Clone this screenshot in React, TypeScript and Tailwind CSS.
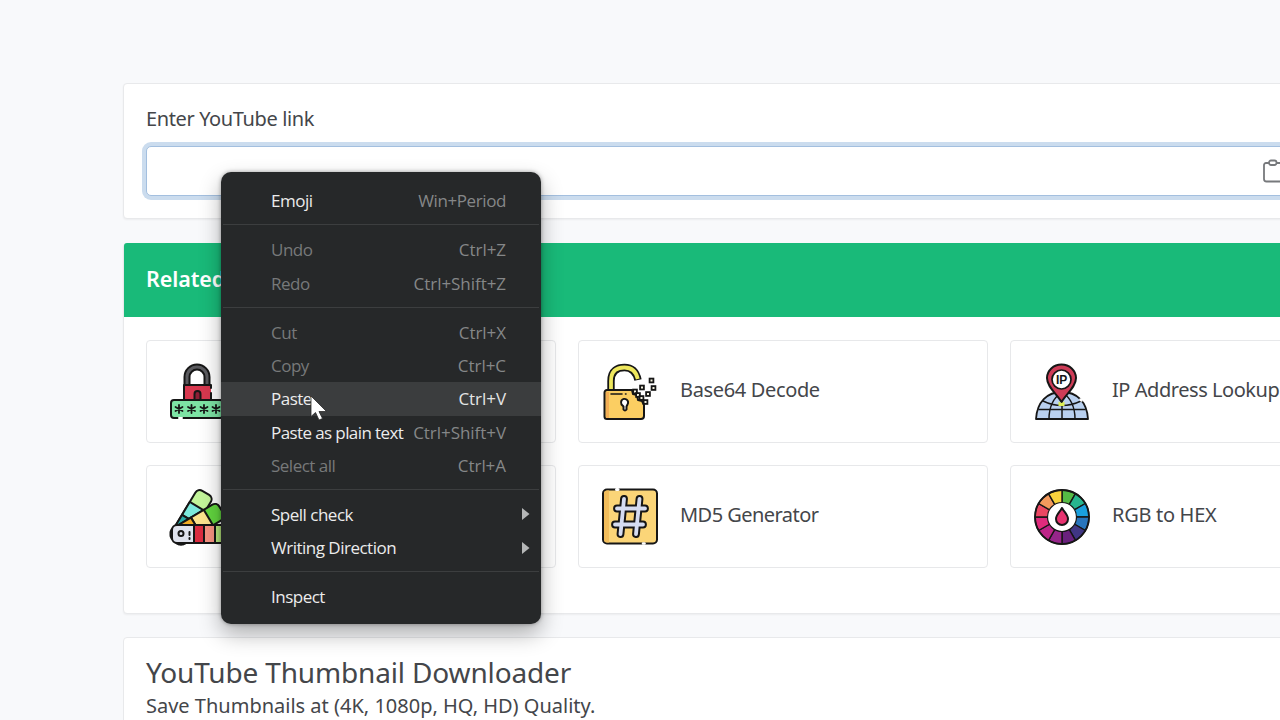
import type { ReactNode } from "react"
import clsx from "clsx"

const outline = {
  stroke: "#161616",
  strokeWidth: 2,
  strokeLinecap: "round",
  strokeLinejoin: "round",
} as const

function PasswordIcon() {
  return (
    <svg viewBox="1 0 56 56" className="relative -top-px size-14 shrink-0" fill="none" {...outline}>
      <path d="M18 23V14a10 10 0 0 1 20 0v9" strokeWidth={7} />
      <path d="M18 22V14a10 10 0 0 1 20 0v8" stroke="#5b5b5f" strokeWidth={3} />
      <path d="M15 22h27v14H15z" fill="#d8384f" stroke="none" />
      <path d="M25.500 36v-5a3 3 0 0 1 6 0v5" fill="#8d1e35" />
      <path d="M15 36V22h27v3M42 30v6" />
      <rect x="2" y="37" width="52" height="18" rx="3" fill="#7de3a4" />
      <path d="M10 55h3" stroke="#fff" />
      {[10, 22.5, 35, 47].map((x) => (
        <path key={x} d={`M${x} 42v8M${x - 3.5} 44l7 4M${x + 3.5} 44l-7 4`} strokeWidth={1.8} />
      ))}
    </svg>
  )
}

function SwatchIcon() {
  return (
    <svg viewBox="0 0 56 56" className="relative -top-px size-14 shrink-0 overflow-visible" fill="none" {...outline}>
      <g transform="rotate(-59 11 46)">
        <rect x="2" y="37" width="57" height="18" rx="5" fill="#c3f59a" />
        <path d="M28 37h15v18H28z" fill="#7ce9dc" />
        <path d="M13 37h15v18H13z" fill="#28a8a5" />
      </g>
      <g transform="rotate(-31 11 46)">
        <rect x="2" y="37" width="56" height="18" rx="5" fill="#62d63f" />
        <path d="M28 37h15v18H28z" fill="#fbe38e" />
        <path d="M13 37h15v18H13z" fill="#f2ad24" />
      </g>
      <rect x="2" y="37" width="52" height="18" rx="5" fill="#dfe2ed" />
      <path d="M24 37h10v18H24z" fill="#db2c40" />
      <path d="M34 37h11v18H34z" fill="#f79281" />
      <path d="M45 37h6a3 3 0 0 1 3 3v12a3 3 0 0 1-3 3h-6z" fill="#b7e87c" />
      <circle cx="11" cy="45.500" r="2.500" />
      <path d="M19.500 44v3M19.500 50v1" />
    </svg>
  )
}

function DecodeIcon() {
  const bits = [
    [49.5, 17.5], [40, 24.5], [51.5, 25], [46, 31], [33, 28.5],
    [36, 32], [39.5, 35], [43.5, 39],
  ]
  return (
    <svg viewBox="0 0 56 58" className="relative h-[58px] w-14 shrink-0" fill="none" {...outline}>
      <path d="M9 27V18C9 7 16 4.500 22.500 4.500S34 8 36 17" strokeWidth={7.4} strokeLinecap="butt" />
      <path d="M9 27V18C9 7 16 4.500 22.500 4.500S34 8 35.800 16" stroke="#eee75d" strokeWidth={3.8} strokeLinecap="butt" />
      <path
        d="M5 27h25l1 4 4 1 1 5 4 1 2 4v11a3 3 0 0 1-3 3H5a2.500 2.500 0 0 1-2.500-2.500v-24A2.500 2.500 0 0 1 5 27Z"
        fill="#fbce62"
      />
      <path d="M4 29h3v26H4z" fill="#f3ae55" stroke="none" />
      <path d="M9 31h11M23.500 31h.5" strokeWidth={1.6} />
      <path d="M19.500 37.500a3.500 3.500 0 0 1 6 4l-1 2v3q-1.500 2-3 0v-3l-2-2q-1-2 0-4Z" fill="#fff" />
      {bits.map(([x, y]) => (
        <rect key={`${x}-${y}`} x={x - 1.9} y={y - 1.9} width="3.800" height="3.800" fill="#f4f1df" strokeLinejoin="miter" strokeWidth={1.8} />
      ))}
    </svg>
  )
}

function HashIcon() {
  const hash = "M22 11 18.500 46M37.500 11 34 46M15 20.500h28M13 36.500h28"
  return (
    <svg viewBox="0 0 56 57" className="h-[57px] w-14 shrink-0" fill="none" {...outline}>
      <rect x="1" y="1.500" width="54" height="54" rx="4" fill="#fbd578" />
      <path d="M2 5a3 3 0 0 1 3-2.500h2v52H5A3 3 0 0 1 2 52z" fill="#f2bd5b" stroke="none" />
      <path d="M14.500 1.500h1.500" stroke="#fff" strokeWidth={3} />
      <path d="M41 55.500h1.500" stroke="#fff" strokeWidth={2.5} />
      <path d={hash} strokeWidth={7.8} />
      <path d={hash} stroke="#d5dcf1" strokeWidth={3.8} />
    </svg>
  )
}

function IpIcon() {
  return (
    <svg viewBox="0 0 56 58" className="relative h-[58px] w-14 shrink-0" fill="none" {...outline}>
      <path d="M2 56C3 39 13 29 28 29s25 10 26 27Z" fill="#b9d0ef" strokeWidth={1.8} />
      <path d="M15 56c0-11 4-21 13-27 9 6 13 16 13 27M28 30v26M9 38q19 9 38 0M5 46.500h46" strokeWidth={1.5} />
      <path d="m46.500 36.500 1 1" stroke="#fff" strokeWidth={2.5} />
      <path d="M27.500 39C23 31 13 24 13 15a14.500 13.500 0 0 1 29 0c0 9-10 16-14.500 24Z" fill="#ce3c57" />
      <path d="m24.500 38.500 3 1.500 3-1.500v4.500h-6z" fill="#dcee58" stroke="none" />
      <circle cx="27.500" cy="16.500" r="9.500" fill="#fff" strokeWidth={1.7} />
      <text
        x="27.700"
        y="20.800"
        textAnchor="middle"
        fill="#161616"
        stroke="none"
        className="font-['Liberation_Sans'] text-[12px] font-bold"
      >
        IP
      </text>
    </svg>
  )
}

// clockwise from twelve o'clock
const wheel = [
  "#55ba45", "#27b58f", "#1aa0de", "#2875bc", "#403684", "#6a217d",
  "#97258a", "#bd2488", "#e02b7c", "#eb4762", "#f39a5c", "#f8d33c",
]

function ColorWheelIcon() {
  const point = (deg: number, r: number) => {
    const a = ((deg - 90) * Math.PI) / 180
    return `${(28 + r * Math.cos(a)).toFixed(2)} ${(28 + r * Math.sin(a)).toFixed(2)}`
  }
  return (
    <svg viewBox="0 0 56 56" className="size-14 shrink-0" fill="none" {...outline}>
      {wheel.map((color, i) => (
        <path
          key={color}
          d={`M28 28L${point(i * 30, 27)}A27 27 0 0 1 ${point(i * 30 + 30, 27)}Z`}
          fill={color}
          strokeWidth={1.4}
        />
      ))}
      <circle cx="28" cy="28" r="27" strokeWidth={1.8} />
      <circle cx="28" cy="28" r="14.500" fill="#fff" strokeWidth={1.2} />
      <path d="M28 19c-2 4-6 6.500-6 11a6 6 0 0 0 12 0c0-4.500-4-7-6-11Z" fill="#e73370" />
    </svg>
  )
}

function ToolCard({ icon, label, className }: { icon: ReactNode; label?: string; className?: string }) {
  return (
    <div className="flex items-center gap-[22px] rounded-[4px] border border-[#e7e8ea] bg-white pl-[23px]">
      {icon}
      <span className={clsx("pb-[4px] text-[20px] whitespace-nowrap", className)}>{label}</span>
    </div>
  )
}

type Item = {
  label: string
  keys?: string
  state?: "disabled" | "active"
  submenu?: boolean
  labelClass?: string
  keysClass?: string
}

const groups: Item[][] = [
  [{ label: "Emoji", keys: "Win+Period", keysClass: "tracking-[-0.4px]" }],
  [
    { label: "Undo", keys: "Ctrl+Z", state: "disabled" },
    { label: "Redo", keys: "Ctrl+Shift+Z", state: "disabled" },
  ],
  [
    { label: "Cut", keys: "Ctrl+X", state: "disabled" },
    { label: "Copy", keys: "Ctrl+C", state: "disabled" },
    { label: "Paste", keys: "Ctrl+V", state: "active" },
    { label: "Paste as plain text", keys: "Ctrl+Shift+V", labelClass: "tracking-[-0.6px]" },
    { label: "Select all", keys: "Ctrl+A", state: "disabled" },
  ],
  [
    { label: "Spell check", submenu: true },
    { label: "Writing Direction", submenu: true },
  ],
  [{ label: "Inspect" }],
]

function MenuItem({ item }: { item: Item }) {
  return (
    <div
      className={clsx(
        "flex h-[33.4px] items-center pr-[35px] pl-[50px] whitespace-nowrap",
        item.state === "active" && "bg-[#3b3d3e]"
      )}
    >
      <span
        className={clsx(
          item.state === "disabled" ? "text-[#77797a]" : "text-[#ececec]",
          item.labelClass ?? "tracking-[-0.5px]"
        )}
      >
        {item.label}
      </span>
      {item.keys && (
        <span
          className={clsx(
            "ml-auto",
            item.state === "active" ? "text-[#e4e5e5]" : "text-[#858788]",
            item.keysClass ?? "tracking-[-0.05px]"
          )}
        >
          {item.keys}
        </span>
      )}
      {item.submenu && (
        <svg viewBox="0 0 8 12" className="-mr-[24px] mb-px ml-auto h-3 w-2" fill="#b5b7b7">
          <path d="M0 0 7.500 6 0 12Z" />
        </svg>
      )}
    </div>
  )
}

function ContextMenu() {
  return (
    <div className="absolute top-[172px] left-[221px] h-[452px] w-[320px] rounded-[10px] bg-[#262829] pt-[12.5px] font-['Open_Sans','Noto_Sans',sans-serif] text-[17px] shadow-[0_10px_22px_rgba(0,0,0,0.3),0_0_4px_rgba(0,0,0,0.35)]">
      {groups.map((items, i) => (
        <div key={i}>
          {i > 0 && <div className="mx-[2px] mt-[6.5px] mb-[8px] h-px bg-[#3c3e3f]" />}
          {items.map((item) => (
            <MenuItem key={item.label} item={item} />
          ))}
        </div>
      ))}
    </div>
  )
}

function Cursor() {
  return (
    <svg viewBox="0 0 18 26" className="absolute top-[395px] left-[310px] h-[26px] w-[18px]">
      <path d="M1 1v20.500l4.500-4 3.500 7.500 3.500-1.500-3.500-7H16.500Z" fill="#fff" stroke="#2a2a2a" strokeWidth="0.800" />
    </svg>
  )
}

function App() {
  return (
    <div className="relative h-[720px] w-[1280px] overflow-hidden bg-[#f8f9fb] font-['Noto_Sans','Open_Sans',sans-serif] text-[#44464a]">
      <main className="ml-[123px] flex w-[1320px] flex-col pt-[83px]">
        <section className="h-[136px] rounded-[4px] border border-[#e8e9eb] bg-white px-[22px] pt-[20px] shadow-xs">
          <label className="block text-[20px] leading-[30px] tracking-[-0.38px]">Enter YouTube link</label>
          <div className="mt-[12px] flex h-[50px] items-center rounded-[5px] border border-[#a3bfdf] bg-white shadow-[0_0_0_4px_#cbdcee]">
            <svg viewBox="0 0 22 24" className="ml-[1115px] h-6 w-[22px]" fill="none" stroke="#77797c" strokeWidth="1.800">
              <path d="M7 4H4a2 2 0 0 0-2 2v14a2.500 2.500 0 0 0 2.500 2.500h13A2.500 2.500 0 0 0 20 20V6a2 2 0 0 0-2-2h-4" />
              <rect x="7" y="1.500" width="7.500" height="4.500" rx="2" />
            </svg>
          </div>
        </section>

        <section className="mt-6 h-[371px] rounded-[4px] border border-[#e8e9eb] bg-white shadow-xs">
          <h2 className="-mt-px flex h-[74px] items-center rounded-t-[3px] bg-[#19ba79] pb-[2px] pl-[22px] text-[21.5px] font-semibold tracking-[-0.1px] text-white">
            Related Tools
          </h2>
          <div className="grid grid-cols-3 grid-rows-[103px_103px] gap-[22px] px-[22px] pt-[23px]">
            <ToolCard icon={<PasswordIcon />} />
            <ToolCard icon={<DecodeIcon />} label="Base64 Decode" className="tracking-[-0.35px]" />
            <ToolCard icon={<IpIcon />} label="IP Address Lookup" className="tracking-[-0.45px]" />
            <ToolCard icon={<SwatchIcon />} />
            <ToolCard icon={<HashIcon />} label="MD5 Generator" className="tracking-[-0.54px]" />
            <ToolCard icon={<ColorWheelIcon />} label="RGB to HEX" className="tracking-[-0.3px]" />
          </div>
        </section>

        <section className="mt-[23px] h-[120px] rounded-[4px] border border-[#e8e9eb] bg-white px-[22px] pt-[17px] whitespace-nowrap">
          <h1 className="text-[28px] leading-[34px] tracking-[-0.15px]">YouTube Thumbnail Downloader</h1>
          <p className="text-[20px] leading-[34px]">Save Thumbnails at (4K, 1080p, HQ, HD) Quality.</p>
        </section>
      </main>
      <ContextMenu />
      <Cursor />
    </div>
  )
}

export default App
